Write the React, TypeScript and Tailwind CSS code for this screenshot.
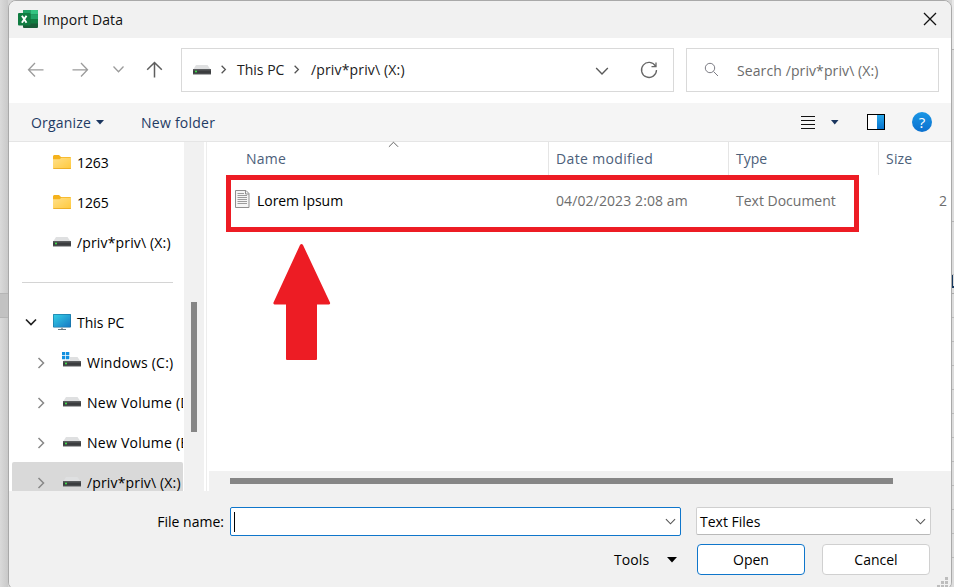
import type { ReactNode } from "react";

function Chevron({ dir, className, size = 12, width = 1.3 }: { dir: "down" | "right" | "up"; className: string; size?: number; width?: number }) {
  const d = dir === "down" ? "M1 3.5 L6 8.5 L11 3.5" : dir === "up" ? "M1 8.5 L6 3.5 L11 8.5" : "M3.5 1 L8.5 6 L3.5 11";
  return (
    <svg width={size} height={size} viewBox="0 0 12 12" fill="none" stroke="currentColor" strokeWidth={width} className={"shrink-0 " + className}>
      <path d={d} />
    </svg>
  );
}

function Drive({ windows = false }: { windows?: boolean }) {
  return (
    <svg width="20" height="18" viewBox="0 0 20 18" className="shrink-0 overflow-visible">
      <path d="M4 4 H15.500 L18.600 8.500 H1.200 Z" fill="#dfe0e1" />
      <rect x="1" y="8" width="18" height="5.500" fill="#5a5c5e" />
      <rect x="1" y="9.500" width="18" height="3" fill="#3b3d3f" />
      <rect x="3" y="9.700" width="2" height="1.600" fill="#3fdc4b" />
      {windows && (
        <>
          <rect x="-1" y="-2" width="9" height="9" fill="#fff" />
          <path d="M0 -1h3.300v3.300H0zM4 -1h3.300v3.300H4zM0 3h3.300v3.300H0zM4 3h3.300v3.300H4z" fill="#1290e0" />
        </>
      )}
    </svg>
  );
}

function Folder() {
  return (
    <svg width="20" height="16" viewBox="0 0 20 16" className="shrink-0">
      <defs>
        <linearGradient id="folder" x1="0" y1="0" x2="1" y2="1">
          <stop offset="0" stopColor="#ffe08a" />
          <stop offset="1" stopColor="#ffc93c" />
        </linearGradient>
      </defs>
      <path d="M1 2.5 Q1 1 2.300 1 H7 L9 3 H18 Q19 3 19 4 V8 H1 Z" fill="#f5b21c" />
      <path d="M1 5.300 H7.500 L9.500 3.700 H19 V14 Q19 15 18 15 H2 Q1 15 1 14 Z" fill="url(#folder)" />
      <path d="M1 14.200 H19 V14.500 Q19 15 18 15 H2 Q1 15 1 14.200Z" fill="#e8a51c" />
    </svg>
  );
}

function Monitor() {
  return (
    <svg width="20" height="18" viewBox="0 0 20 18" className="shrink-0">
      <defs>
        <linearGradient id="screen" x1="0" y1="0" x2="1" y2="1">
          <stop offset="0" stopColor="#35cfe6" />
          <stop offset="1" stopColor="#1679c4" />
        </linearGradient>
      </defs>
      <rect x="1" y="1" width="18" height="13.500" rx="0.800" fill="#176d9c" />
      <rect x="1.600" y="1.600" width="16.800" height="12.300" fill="url(#screen)" />
      <path d="M9 14.500h2v2H9z" fill="#9aa5ab" />
      <path d="M6 16h8v1H6z" fill="#687780" />
    </svg>
  );
}

function ExcelLogo() {
  return (
    <svg width="20" height="18" viewBox="0 0 20 18" className="-mt-px shrink-0">
      <rect x="5" y="0" width="15" height="18" rx="1" fill="#185c37" />
      <path d="M6 0h6.500v4.500H5V1q0-1 1-1z" fill="#21a366" />
      <path d="M12.500 0H19q1 0 1 1v3.500h-7.500z" fill="#33c481" />
      <path d="M5 4.500h7.500V9H5z" fill="#107c41" />
      <path d="M12.500 4.500H20V9h-7.500z" fill="#21a366" />
      <path d="M12.500 9H20v4.500h-7.500z" fill="#107c41" />
      <rect x="0" y="3" width="12.500" height="12.500" rx="1" fill="#107c41" />
      <path d="M3.900 5.700 L8.500 12.700 M8.500 5.700 L3.900 12.700" stroke="#fff" strokeWidth="1.900" />
    </svg>
  );
}

function TreeRow({ label, icon, level, open, selected, tracking = "" }: { label: string; icon: ReactNode; level: "pin" | "root" | "child"; open?: boolean; selected?: boolean; tracking?: string }) {
  return (
    <div className={"ml-[3px] flex h-10 w-[171px] shrink-0 items-center overflow-hidden rounded-t-[2px] " + (selected ? "bg-[#d9d9d9]" : "")}>
      <div className={"flex shrink-0 items-center " + (level === "child" ? "w-[50px] pl-[23px]" : "w-10 pl-3")}>
        {level === "child" && <Chevron dir="right" className="mt-px text-[#888]" size={12} width={1.5} />}
        {open && <Chevron dir="down" className="ml-px text-[#222]" size={12} width={1.7} />}
      </div>
      {icon}
      <span className={"mt-[2px] ml-[5px] whitespace-nowrap " + tracking}>{label}</span>
    </div>
  );
}

function NavBar() {
  return (
    <div className="flex h-[65px] shrink-0 items-center bg-white pr-3">
      <svg width="172" height="65" viewBox="0 0 172 65" fill="none" stroke="#9b9b9b" strokeWidth="1.300" className="shrink-0">
        <path d="M34.500 31.800H19.500M26 25L19.500 31.800L26 38.500" />
        <path d="M63.500 31.800H78.500M72 25L78.500 31.800L72 38.500" />
        <path d="M104.500 28.500L109.500 33.700L114.500 28.500" />
        <path d="M145.500 39.500V24.500M138.200 31.800L145.500 24.500L152.800 31.800" stroke="#5e5e5e" strokeWidth="1.500" />
      </svg>
      <div className="mt-[-2px] flex h-11 w-[493px] shrink-0 items-center border border-[#d9d9d9] pl-2.5 text-[#202020]">
        <Drive />
        <Chevron dir="right" className="ml-[7px] text-[#555]" size={9} width={1.7} />
        <span className="ml-[7px] w-[51px] pl-[2px]">This PC</span>
        <Chevron dir="right" className="ml-[6px] text-[#555]" size={9} width={1.7} />
        <span className="ml-[10px] tracking-[0.15px]">/priv*priv\ (X:)</span>
        <Chevron dir="down" className="mt-[2px] ml-auto text-[#5a5a5a]" size={14} width={1.2} />
        <svg width="20" height="20" viewBox="0 0 20 20" fill="none" stroke="#666" strokeWidth="1.300" className="ml-[30px] mr-[14px]">
          <path d="M16.500 6.200A7.500 7.500 0 1 0 17.500 10M17 2.500V6.700H12.500" />
        </svg>
      </div>
      <div className="mt-[-2px] ml-3 flex h-11 w-[253px] shrink-0 items-center border border-[#d9d9d9] text-[#6b6b6b]">
        <svg width="16" height="16" viewBox="0 0 16 16" fill="none" stroke="#7c7c84" strokeWidth="1" className="ml-[17px]">
          <circle cx="6" cy="6" r="4.700" />
          <path d="M9.500 9.500L14 14" />
        </svg>
        <span className="mt-[2px] ml-[17px] tracking-[0.1px]">Search /priv*priv\ (X:)</span>
      </div>
    </div>
  );
}

function Toolbar() {
  return (
    <div className="flex h-[39px] shrink-0 items-center border-b border-[#e5e5e5] bg-[#f5f5f5] pr-[19px] pl-[22px] text-[#1f3b64]">
      <span className="mt-px w-[60px] tracking-[0.2px]">Organize</span>
      <svg width="8" height="5" className="ml-[5px]"><path d="M0 0h8L4 4.500z" fill="#1b365f" /></svg>
      <span className="mt-px ml-[37px] tracking-[0.25px]">New folder</span>
      <svg width="14" height="14" viewBox="0 0 14 14" className="mt-px ml-auto" stroke="#111" strokeWidth="1" shapeRendering="crispEdges">
        <path d="M0 .5h14M0 4.500h14M0 8.500h14M0 12.500h14" />
      </svg>
      <svg width="8" height="5" className="ml-4"><path d="M0 0h7.500L3.750 4.500z" fill="#1b365f" /></svg>
      <div className="ml-[28px] flex h-4 w-[18px] border border-black bg-white">
        <div className="ml-auto w-[7px] bg-linear-to-b from-[#28a8ea] to-[#0873ce]" />
      </div>
      <div className="ml-[27px] flex size-5 items-center justify-center rounded-full bg-linear-to-b from-[#1c97e5] to-[#0b70cf] text-[15px] leading-none text-white">?</div>
    </div>
  );
}

function Sidebar() {
  return (
    <div className="flex h-[349px] w-[175px] shrink-0 flex-col overflow-hidden bg-white">
      <TreeRow label="1263" icon={<Folder />} level="pin" tracking="tracking-[-0.1px]" />
      <TreeRow label="1265" icon={<Folder />} level="pin" tracking="tracking-[-0.1px]" />
      <TreeRow label="/priv*priv\ (X:)" icon={<Drive />} level="pin" tracking="tracking-[0.15px]" />
      <div className="ml-[13px] flex h-10 w-[151px] shrink-0 items-center">
        <div className="h-px w-full bg-[#d4d4d4]" />
      </div>
      <TreeRow label="This PC" icon={<Monitor />} level="root" open />
      <TreeRow label="Windows (C:)" icon={<Drive windows />} level="child" tracking="tracking-[0.2px]" />
      <TreeRow label="New Volume (D:)" icon={<Drive />} level="child" tracking="tracking-[0.25px]" />
      <TreeRow label="New Volume (E:)" icon={<Drive />} level="child" tracking="tracking-[0.25px]" />
      <TreeRow label="/priv*priv\ (X:)" icon={<Drive />} level="child" selected tracking="tracking-[0.15px]" />
    </div>
  );
}

function FilePane() {
  return (
    <div className="relative h-[329px] flex-1 bg-white">
      <div className="flex h-[33px] text-[#4c607a]">
        <div className="w-[342px] border-r border-[#e5e5e5] pt-[7px] pl-[39px] tracking-[0.2px]">Name</div>
        <div className="w-[180px] border-r border-[#e5e5e5] pt-[7px] pl-[7px] tracking-[0.35px]">Date modified</div>
        <div className="w-[150px] border-r border-[#e5e5e5] pt-[7px] pl-[7px]">Type</div>
        <div className="pt-[7px] pl-[7px] tracking-[0.2px]">Size</div>
      </div>
      <Chevron dir="up" className="absolute top-[-3px] left-[181px] text-[#555]" size={11} width={1} />
      <div className="ml-[19px] flex h-[57px] w-[633px] items-start border-5 border-[#ed1c24] pt-[10px]">
        <svg width="16" height="18" viewBox="0 0 16 18" className="ml-[4px] shrink-0">
          <path d="M.5 .5H11L14 3.500V17.500H.5Z" fill="#f5f5f5" stroke="#8f8f8f" />
          <path d="M10.500 .5V4H14" fill="none" stroke="#8f8f8f" />
          <path d="M2.500 3.500H9M2.500 5.500H12M2.500 7.500H12M2.500 9.500H12M2.500 11.500H12M2.500 13.500H12" stroke="#9c9c9c" />
        </svg>
        <span className="mt-px ml-[6px] w-[299px] tracking-[-0.05px] text-black">Lorem Ipsum</span>
        <span className="mt-px w-[180px] tracking-[0.1px] text-[#6d6d6d]">04/02/2023 2:08 am</span>
        <span className="mt-px text-[#6d6d6d]">Text Document</span>
      </div>
      <span className="absolute top-[49px] right-1 text-[#6d6d6d]">2</span>
      <svg width="60" height="120" viewBox="0 0 60 120" className="absolute top-[101px] left-[65px]" fill="#ed1c24">
        <path d="M28 2Q29.500 0 31 2L58 59.500Q58.500 61 57 61.500H45V116Q45 117 44 117H15Q14 117 14 116V61.500H2.500Q1 61 1.500 59.500Z" />
      </svg>
    </div>
  );
}

function Footer() {
  return (
    <div className="flex flex-1 flex-col bg-[#f1f1f1] text-black">
      <div className="mt-[16px] flex h-[29px] items-center">
        <span className="w-[221px] pr-[6px] text-right">File name:</span>
        <div className="flex h-[29px] w-[451px] items-center rounded-[2px] border border-[#0f76cb] bg-white pl-[3px]">
          <div className="h-5 w-px bg-black" />
          <Chevron dir="down" className="mr-1 ml-auto text-[#555]" size={11} width={1.2} />
        </div>
        <div className="-mt-px ml-[15px] flex h-[28px] w-[235px] items-center rounded-[2px] border border-[#cfcfcf] border-b-[#b9b9b9] bg-white pl-[3px]">
          <span className="mt-px">Text Files</span>
          <Chevron dir="down" className="mr-[4px] ml-auto text-[#555]" size={11} width={1.2} />
        </div>
      </div>
      <div className="mt-[8px] flex h-[31px] items-center">
        <span className="ml-[605px] w-[36px] tracking-[0.1px]">Tools</span>
        <svg width="10" height="6" className="ml-[17px]"><path d="M0 0h10L5 5.500z" fill="#000" /></svg>
        <button className="ml-[20px] h-[31px] w-[108px] rounded-[4px] border border-[#0f76cb] bg-white">Open</button>
        <button className="ml-[17px] h-[31px] w-[108px] rounded-[4px] border border-[#d0d0d0] bg-white">Cancel</button>
      </div>
      <svg width="12" height="12" viewBox="0 0 12 12" fill="#bdbdbd" className="mt-[2px] ml-[928px]">
        <path d="M8 0h3v3H8zM4 4h3v3H4zM8 4h3v3H8zM0 8h3v3H0zM4 8h3v3H4zM8 8h3v3H8z" />
      </svg>
    </div>
  );
}

export default function App() {
  return (
    <div className="flex h-[587px] w-[954px] overflow-hidden bg-[#d6d6d6] font-['Open_Sans','Noto_Sans',sans-serif] text-[14px] leading-5">
      <div className="w-2 shrink-0 bg-linear-to-r from-[#dadada] to-[#c9c9c9]">
        <div className="mt-[293px] h-[25px] border-y border-[#b5b5b5] bg-[#c2c2c2]" />
      </div>
      <div className="flex h-[590px] w-[944px] shrink-0 flex-col overflow-hidden rounded-[8px] border border-[#a9a9a9] bg-[#f1f1f1]">
        <div className="flex h-[37px] shrink-0 items-center bg-[#f1f1f1] pr-[14px] pl-[9px] text-[#111]">
          <ExcelLogo />
          <span className="ml-[5px] tracking-[0.1px]">Import Data</span>
          <svg width="14" height="14" viewBox="0 0 14 14" stroke="#111" strokeWidth="1.300" className="-mt-px ml-auto"><path d="M1 1L13 13M13 1L1 13" /></svg>
        </div>
        <NavBar />
        <Toolbar />
        <div className="flex h-[349px] shrink-0">
          <Sidebar />
          <div className="w-5 shrink-0 bg-[#f1f1f1] pt-[160px] pl-[7px]">
            <div className="h-[130px] w-[6px] bg-[#868686]" />
          </div>
          <div className="w-[3px] shrink-0 border-r border-[#ededed] bg-white" />
          <div className="flex flex-1 flex-col">
            <FilePane />
            <div className="h-5 border-l-2 border-white bg-[#f1f1f1] pt-[7px] pl-[21px]">
              <div className="h-[6px] w-[663px] bg-[#868686]" />
            </div>
          </div>
        </div>
        <Footer />
      </div>
      <div className="flex flex-1 flex-col bg-[#dcdcdc]">
        <div className="h-[50px] border-b border-[#b5b5b5] bg-[#e8e8e8]" />
        <div className="h-[172px] border-b border-[#b5b5b5]" />
        <div className="h-[53px] border-b border-[#c2c2c2]" />
        <div className="h-[13px] w-[2px] border-b-2 border-l border-[#17395f]" />
        <div className="h-[6px] border-b border-[#aaa]" />
        <div className="h-6 border-b border-[#bbb]" />
        <div className="h-6 border-b border-[#bbb]" />
        <div className="h-6 border-b border-[#bbb]" />
        <div className="h-6 border-b border-[#bbb]" />
        <div className="h-6 border-b border-[#bbb]" />
        <div className="h-6 border-b border-[#bbb]" />
        <div className="h-6 border-b border-[#bbb]" />
        <div className="h-6 border-b border-[#bbb]" />
        <div className="h-6 border-b border-[#bbb]" />
        <div className="h-6 border-b border-[#bbb]" />
        <div className="h-6 border-b border-[#bbb]" />
      </div>
    </div>
  );
}
